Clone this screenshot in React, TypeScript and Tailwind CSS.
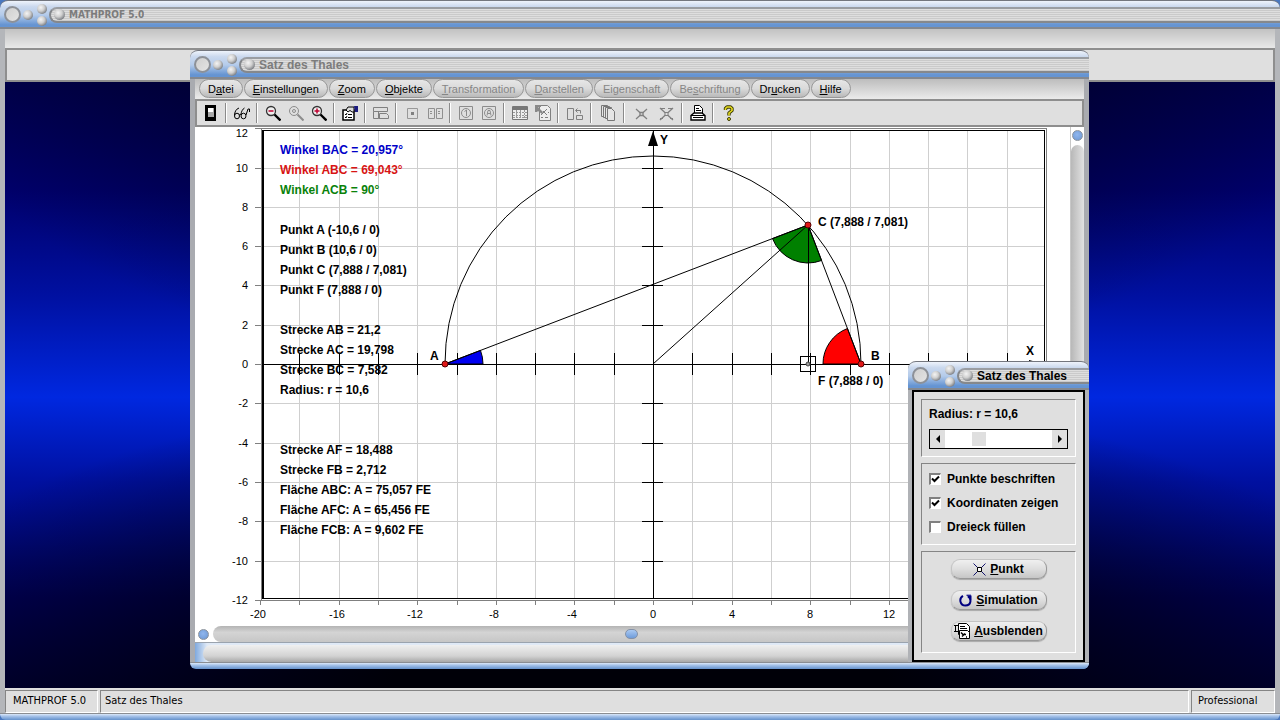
import { ReactNode, useState } from "react";
import clsx from "clsx";

const MENU = [
  { before: "D", key: "a", after: "tei" },
  { before: "", key: "E", after: "instellungen" },
  { before: "", key: "Z", after: "oom" },
  { before: "", key: "O", after: "bjekte" },
  { before: "", key: "T", after: "ransformation", disabled: true },
  { before: "", key: "D", after: "arstellen", disabled: true },
  { before: "Ei", key: "g", after: "enschaft", disabled: true },
  { before: "Be", key: "s", after: "chriftung", disabled: true },
  { before: "Dr", key: "u", after: "cken" },
  { before: "", key: "H", after: "ilfe" },
];

const RESULTS = [
  { row: 0, text: "Winkel BAC = 20,957°", color: "fill-[#0000c8]" },
  { row: 1, text: "Winkel ABC = 69,043°", color: "fill-[#d81414]" },
  { row: 2, text: "Winkel ACB = 90°", color: "fill-[#0a820a]" },
  { row: 4, text: "Punkt A (-10,6 / 0)" },
  { row: 5, text: "Punkt B (10,6 / 0)" },
  { row: 6, text: "Punkt C (7,888 / 7,081)" },
  { row: 7, text: "Punkt F (7,888 / 0)" },
  { row: 9, text: "Strecke AB = 21,2" },
  { row: 10, text: "Strecke AC = 19,798" },
  { row: 11, text: "Strecke BC = 7,582" },
  { row: 12, text: "Radius: r = 10,6" },
  { row: 15, text: "Strecke AF = 18,488" },
  { row: 16, text: "Strecke FB = 2,712" },
  { row: 17, text: "Fläche ABC: A = 75,057 FE" },
  { row: 18, text: "Fläche AFC: A = 65,456 FE" },
  { row: 19, text: "Fläche FCB: A = 9,602 FE" },
];

// plot units -> svg units
const UNIT = 19.65;
const X0 = 458;
const Y0 = 237;
const px = (x: number) => Math.round(X0 + x * UNIT);
const py = (y: number) => Math.round(Y0 - y * UNIT);

const RADIUS = 10.6;
const A = { x: px(-RADIUS), y: Y0 };
const B = { x: px(RADIUS), y: Y0 };
const C = { x: px(7.888), y: py(7.081) };
const F = { x: C.x, y: Y0 };

const range = (from: number, to: number, step: number) => {
  const out: number[] = [];
  for (let i = from; i <= to; i += step) out.push(i);
  return out;
};

function sector(p: { x: number; y: number }, r: number, from: number, to: number) {
  const rad = Math.PI / 180;
  const x1 = p.x + r * Math.cos(from * rad);
  const y1 = p.y - r * Math.sin(from * rad);
  const x2 = p.x + r * Math.cos(to * rad);
  const y2 = p.y - r * Math.sin(to * rad);
  return `M${p.x} ${p.y}L${x1} ${y1}A${r} ${r} 0 0 0 ${x2} ${y2}Z`;
}

function Orb({ label, big, className }: { label: string; big?: boolean; className: string }) {
  return (
    <button
      type="button"
      aria-label={label}
      className={clsx(
        "shrink-0 rounded-full",
        big
          ? "border-2 border-[#8d9198] bg-[linear-gradient(135deg,#cfcfcf,#e4e4e4)]"
          : "bg-[radial-gradient(circle_at_38%_35%,#f4f4f4,#cfcfcf_40%,#7c7f84_75%)]",
        className
      )}
    />
  );
}

function BlueOrb({ label }: { label: string }) {
  return (
    <button
      type="button"
      aria-label={label}
      className="size-[11px] shrink-0 rounded-full border border-[#8a929c] bg-[radial-gradient(circle_at_45%_40%,#8fb6ee,#7aa3dd_60%,#6b8fc2)]"
    />
  );
}

function TitleBar({ title, active, tahoma }: { title: string; active?: boolean; tahoma?: boolean }) {
  return (
    <header className="flex h-[29px] shrink-0 flex-col rounded-t-lg border-t border-[#73767e] bg-[linear-gradient(#eef3fb,#cbd9ee_20%,#b4cbea_50%,#6594d2_85%,#6594d2_93%,#84888f_94%)]">
      <div className="flex h-[27px] items-center pl-1">
        <Orb label="Schließen" big className="size-[17px]" />
        <Orb label="Minimieren" className="ml-[2px] size-[10px]" />
        <div className="ml-1 flex flex-col gap-[2px]">
          <Orb label="Maximieren" className="size-[10px]" />
          <Orb label="Wiederherstellen" className="size-[10px]" />
        </div>
        <div className="ml-[2px] flex h-4 min-w-0 flex-1 items-center rounded-l-full border-y-2 border-l-2 border-[#85888c] border-t-[#9a9da2] bg-[repeating-linear-gradient(#dedede_0_1px,#cacaca_1px_2px)] pl-[3px]">
          <Orb label="Systemmenü" className="size-[11px]" />
          <h1
            className={clsx(
              "truncate pl-1 font-bold leading-3",
              tahoma
                ? "font-['DejaVu_Sans_Condensed','Liberation_Sans',sans-serif] text-[10px]"
                : "text-[12px]",
              active ? "text-black" : "text-[#7c7c7c]"
            )}
          >
            {title}
          </h1>
        </div>
      </div>
    </header>
  );
}

function BottomEdge() {
  return (
    <div className="h-[7px] shrink-0 rounded-b-md border-t border-[#8a8d92] bg-[linear-gradient(#dce8f8,#a8c4ea_35%,#6d98d0_90%)]" />
  );
}

const ICONS: Record<string, ReactNode> = {
  door: (
    <>
      <path d="M2 0h11v16H2z" fill="#000" />
      <path d="M5 3h6v9H5z" fill="#a8a8a8" />
      <path d="M5 3h5v4H5z" fill="#fff" />
    </>
  ),
  glasses: (
    <g fill="none" stroke="#000">
      <path d="M5 3C2 4 .500 7 .500 10.500M10.500 3C8.500 4 7 7 7 10" />
      <ellipse cx="3" cy="11" rx="2.500" ry="2.800" />
      <ellipse cx="9.500" cy="11" rx="2.500" ry="2.800" />
      <path d="M5.500 10c.5-1 1-1 1.500 0M12 10l2-6 1.500 0v3" />
    </g>
  ),
  zoomOut: (
    <>
      <circle cx="6" cy="6" r="4.500" fill="#eee" stroke="#333" strokeWidth="1.300" />
      <path d="M9.500 9.500l6 6" stroke="#000" strokeWidth="2.400" />
      <path d="M3.500 6h5" stroke="#c00030" strokeWidth="1.500" />
    </>
  ),
  zoomReset: (
    <g fill="none" stroke="#8c8c8c">
      <circle cx="6" cy="6" r="4.500" />
      <circle cx="6" cy="6" r="1.500" />
      <path d="M9.500 9.500l6 6" strokeWidth="2" />
    </g>
  ),
  zoomIn: (
    <>
      <circle cx="6" cy="6" r="4.500" fill="#eee" stroke="#333" strokeWidth="1.300" />
      <path d="M9.500 9.500l6 6" stroke="#000" strokeWidth="2.400" />
      <path d="M3.500 6h5M6 3.500v5" stroke="#c00030" strokeWidth="1.500" />
    </>
  ),
  properties: (
    <>
      <path d="M1 5h11v10H1z" fill="#fff" stroke="#000" strokeWidth="1.500" />
      <path d="M3 9l1 1 1-2M6 9.500h4M3 12l1 1 1-2M6 12.500h4" fill="none" stroke="#000" />
      <path d="M4 5l2-3h6v5h-2L8 5.500 6 7z" fill="#ddd" stroke="#000" />
      <path d="M12 1h4v6h-3z" fill="#1c1c80" />
    </>
  ),
  panels: (
    <g fill="none" stroke="#808080">
      <path d="M.500 2.500h14v4H.500zM.500 6.500v7h5v-7M8.500 13.500H5.500M6.500 8.500h7l2 2v3h-9z" />
    </g>
  ),
  square: (
    <>
      <path d="M3.500 3.500h10v10h-10z" fill="none" stroke="#989898" />
      <path d="M7 7h3v3H7z" fill="#808080" />
    </>
  ),
  squares: (
    <g fill="none" stroke="#909090">
      <path d="M1.500 3.500h6v10h-6zM9.500 3.500h6v10h-6z" />
      <path d="M4 6v4M12 6v4" strokeWidth="2" strokeDasharray="1 1" />
    </g>
  ),
  circleOne: (
    <g fill="none" stroke="#8c8c8c">
      <path d="M1.500 1.500h13v13h-13z" />
      <circle cx="8" cy="8" r="4.500" />
      <path d="M6.500 6.500L8.500 5v6" />
    </g>
  ),
  circleA: (
    <g fill="none" stroke="#8c8c8c">
      <path d="M1.500 1.500h13v13h-13z" />
      <circle cx="8" cy="8" r="4.500" />
      <path d="M6 10.500l1-5h2l1 5M7 8.500h2" />
    </g>
  ),
  table: (
    <>
      <path d="M.500 1.500h15v13H.500z" fill="#eee" stroke="#777" />
      <path d="M1 2h14v3H1z" fill="#777" />
      <path d="M1 7.500h14M1 10.500h14M1 12.500h14M4.500 5v9M8.500 5v9M12.500 5v9" stroke="#999" strokeDasharray="2 1" />
    </>
  ),
  report: (
    <>
      <path d="M4.500 .500h8l3 3v12h-11z" fill="#eee" stroke="#808080" />
      <path d="M0 0h6v2H3l5 5-1 2-4-3-1 1H0z" fill="#888" />
      <path d="M12 4L6 10M8 6l4 4M6 12.500h2M10 12.500h3M13 7.500h1" stroke="#808080" />
    </>
  ),
  transfer: (
    <g fill="none" stroke="#808080">
      <path d="M.500 3.500h6v11h-6zM9.500 10.500h6v4h-6zM9 5.500h4.500v3M10.500 3.500l-2 2 2 2" />
    </g>
  ),
  layers: (
    <g fill="#e5e5e5" stroke="#777">
      <path d="M1.500 .500h6v11h-6z" />
      <path d="M3.500 1.500h6v11h-6z" />
      <path d="M5.500 2.500h6v11h-6z" />
      <path d="M7.500 3.500h4l3 3v9h-7z" />
    </g>
  ),
  cross: (
    <g fill="none" stroke="#808080" strokeWidth="1.300">
      <path d="M3 4l11 10M14 4L3 14" />
      <path d="M7 7.500h3v3H7z" fill="#ddd" />
    </g>
  ),
  crossWide: (
    <g fill="none" stroke="#808080">
      <path d="M2 3l13 12M15 3L2 15" strokeWidth="1.300" />
      <path d="M3 3.500h4M10 3.500h4M2 13.500h3M12 13.500h3" />
      <path d="M7 7.500h3v3H7z" fill="#ddd" />
    </g>
  ),
  printer: (
    <g fill="#fff" stroke="#000">
      <path d="M4.500 8.500v-8h5l3 3v5" />
      <path d="M6 3.500h3M6 5.500h5" />
      <path d="M1 10.500l3-2.500h8l3 2.500v4.500H1z" strokeWidth="1.400" />
      <path d="M1 10.500h14M3 12.500h10" />
    </g>
  ),
  help: (
    <g fill="none" strokeLinejoin="round">
      <path d="M4.500 5V3.500L6 2h3.500L11 3.500v2L8 8v2.500" stroke="#3a3a00" strokeWidth="3.400" />
      <path d="M4.500 5V3.500L6 2h3.500L11 3.500v2L8 8v2.500" stroke="#e8dc20" strokeWidth="1.600" />
      <circle cx="8" cy="14" r="1.500" fill="#e8dc20" stroke="#3a3a00" />
    </g>
  ),
};

const TOOLS: { wide?: boolean; items: { icon: string; label: string }[] }[] = [
  { items: [{ icon: "door", label: "Beenden" }] },
  { items: [{ icon: "glasses", label: "Ansicht" }] },
  {
    items: [
      { icon: "zoomOut", label: "Verkleinern" },
      { icon: "zoomReset", label: "Originalgröße" },
      { icon: "zoomIn", label: "Vergrößern" },
    ],
  },
  { items: [{ icon: "properties", label: "Eigenschaften" }] },
  { items: [{ icon: "panels", label: "Fenster" }] },
  { items: [{ icon: "square", label: "Punkt" }, { icon: "squares", label: "Punkte" }] },
  { items: [{ icon: "circleOne", label: "Objekt 1" }, { icon: "circleA", label: "Objekt A" }] },
  { items: [{ icon: "table", label: "Tabelle" }, { icon: "report", label: "Bericht" }] },
  { wide: true, items: [{ icon: "transfer", label: "Übertragen" }] },
  { wide: true, items: [{ icon: "layers", label: "Ebenen" }] },
  { wide: true, items: [{ icon: "cross", label: "Schnittpunkt" }, { icon: "crossWide", label: "Schnittpunkte" }] },
  { items: [{ icon: "printer", label: "Drucken" }] },
  { items: [{ icon: "help", label: "Hilfe" }] },
];

function Toolbar() {
  return (
    <div className="flex h-[26px] shrink-0 items-center border-x-2 border-b-2 border-[#8e8e8e] bg-[#dfdfdf] pl-[2px]">
      {TOOLS.map((group, i) => (
        <div key={i} className="flex items-center">
          {i > 0 && <div className="mx-[3px] h-5 w-[2px] border-l border-[#8a8a8a] bg-white" />}
          {group.items.map((t) => (
            <button
              key={t.icon}
              type="button"
              aria-label={t.label}
              className={clsx("flex h-[22px] items-center justify-center", group.wide ? "w-[25px]" : "w-[23px]")}
            >
              <svg viewBox="0 0 16 16" className="size-4">
                {ICONS[t.icon]}
              </svg>
            </button>
          ))}
        </div>
      ))}
    </div>
  );
}

function Plot({ labels, coords, filled }: { labels: boolean; coords: boolean; filled: boolean }) {
  const evenX = range(-18, 18, 2);
  const evenY = range(-10, 10, 2);
  return (
    <svg
      viewBox="0 0 875 499"
      preserveAspectRatio="xMinYMin slice"
      className="min-h-0 min-w-0 flex-1 bg-white"
      role="img"
      aria-label="Satz des Thales"
    >
      <g shapeRendering="crispEdges" fill="none">
        <g stroke="#cfcfcf">
          {evenX.map((x) => (
            <path key={x} d={`M${px(x)} 3V472`} />
          ))}
          {evenY.map((y) => (
            <path key={y} d={`M68 ${py(y)}H849`} />
          ))}
        </g>
        <rect x="66.500" y="1.500" width="785" height="472" stroke="#808080" />
        <rect x="67.500" y="3.500" width="782" height="468" stroke="#000" />
        <path d="M68.500 3.500V471.500" stroke="#000" />
        <g stroke="#808080">
          {range(-12, 12, 2).map((y) => (
            <path key={y} d={`M60 ${py(y)}h6`} />
          ))}
          {range(-20, 18, 2).map((x) => (
            <path key={x} d={`M${px(x)} 473v5`} />
          ))}
        </g>
        <g stroke="#000">
          <path d={`M68 ${Y0}H850M${X0} 3V472`} />
          {evenX.map((x) => (
            <path key={x} d={`M${px(x)} ${Y0 - 11}v22`} />
          ))}
          {evenY.map((y) => (
            <path key={y} d={`M${X0 - 11} ${py(y)}h21`} />
          ))}
        </g>
      </g>
      <path d={`M${X0} 4l5 15h-10z`} />
      <path d={`M849 ${Y0}l-15 -4v8z`} />

      <g className="font-['Liberation_Sans',sans-serif] text-[11px]">
        {range(-12, 12, 2).map((y) => (
          <text key={y} x="53" y={y === 12 ? 10 : py(y) + 4} textAnchor="end">
            {y}
          </text>
        ))}
        {range(-20, 16, 4).map((x) => (
          <text key={x} x={px(x) - (x < 0 ? 2 : 0)} y="491" textAnchor="middle">
            {x}
          </text>
        ))}
      </g>

      {filled && <path d={`M${A.x} ${A.y}L${B.x} ${B.y}L${C.x} ${C.y}Z`} fill="#ffff80" />}
      <path d={sector(A, 38, 0, 20.957)} fill="#0000f0" stroke="#000" />
      <path d={sector(B, 38, 110.957, 180)} fill="#ff0000" stroke="#000" />
      <path d={sector(C, 38, 200.957, 290.957)} fill="#008000" stroke="#000" />
      <g fill="none" stroke="#000">
        <path d={`M${A.x} ${A.y}A208 208 0 0 1 ${B.x} ${B.y}`} />
        <path d={`M${A.x} ${A.y}L${C.x} ${C.y}L${B.x} ${B.y}M${X0} ${Y0}L${C.x} ${C.y}`} />
        <path d={`M${C.x} ${C.y}V${F.y}M${F.x - 8} ${F.y - 8}h15v15h-15z`} shapeRendering="crispEdges" />
      </g>
      <circle cx={F.x} cy={F.y} r="2" fill="#999" stroke="#444" />
      {[A, B, C].map((p, i) => (
        <circle key={i} cx={p.x} cy={p.y} r="3" fill="#e01818" stroke="#500" />
      ))}

      <g className="font-['Liberation_Sans',sans-serif] text-[12px] font-bold">
        {RESULTS.map((r) => (
          <text key={r.row} x="85" y={27 + r.row * 20} className={r.color}>
            {r.text}
          </text>
        ))}
        {labels && (
          <>
            <text x={A.x - 15} y="233">A</text>
            <text x={B.x + 10} y="233">B</text>
            <text x="623" y="99">{coords ? "C (7,888 / 7,081)" : "C"}</text>
            <text x="623" y="258">{coords ? "F (7,888 / 0)" : "F"}</text>
          </>
        )}
        <text x="465" y="17">Y</text>
        <text x="831" y="228">X</text>
      </g>
    </svg>
  );
}

function Check({
  label,
  checked,
  onChange,
}: {
  label: string;
  checked: boolean;
  onChange: (v: boolean) => void;
}) {
  return (
    <label className="flex h-4 items-center gap-[6px]">
      <span className="grid size-3">
        <input
          type="checkbox"
          checked={checked}
          onChange={(e) => onChange(e.target.checked)}
          className="peer col-start-1 row-start-1 size-3 appearance-none border-2 border-b border-r border-[#808080] border-b-white border-r-white bg-white"
        />
        <svg viewBox="0 0 12 12" className="pointer-events-none invisible col-start-1 row-start-1 size-3 peer-checked:visible">
          <path d="M3 5.500l2.500 2.500L10 3.500" fill="none" stroke="#000" strokeWidth="2" />
        </svg>
      </span>
      {label}
    </label>
  );
}

function PanelButton({ icon, children }: { icon: ReactNode; children: ReactNode }) {
  return (
    <button
      type="button"
      className="flex h-5 w-24 items-center justify-center gap-1 rounded-[9px] border border-[#c4c4c4] border-b-[#989898] border-r-[#989898] bg-[linear-gradient(#f0f0f0,#dedede_50%,#c6c6c6)] shadow-[0_1px_1px_#a8a8a8]"
    >
      {icon}
      <span>{children}</span>
    </button>
  );
}

const FIELDSET = "border border-[#858585] border-b-white border-r-white";

export default function App() {
  const [labels, setLabels] = useState(true);
  const [coords, setCoords] = useState(true);
  const [filled, setFilled] = useState(false);
  const [radius, setRadius] = useState(10.6);

  const step = (d: number) => setRadius((r) => Math.round((r + d) * 10) / 10);

  return (
    <div className="relative flex h-screen flex-col overflow-hidden bg-[#4a78c0] font-['Liberation_Sans',Arial,sans-serif] text-black">
      <TitleBar title="MATHPROF 5.0" tahoma />
      <div className="flex min-h-0 flex-1 flex-col border-x-[5px] border-[#b4b6ba]">
        <div className="h-[21px] shrink-0 border-b-2 border-[#8e8e8e] bg-[linear-gradient(#c2c2c2,#e8e8e8)]" />
        <div className="h-8 shrink-0 border-x-2 border-b-2 border-[#8e8e8e] bg-[#dfdfdf]" />
        <main className="min-h-0 flex-1 bg-[radial-gradient(ellipse_55%_50%_at_50%_0%,rgba(0,0,10,0.9),transparent),radial-gradient(ellipse_65%_50%_at_50%_100%,#000008_30%,transparent),linear-gradient(#00004c,#00006c_18%,#0010a0_35%,#0028e0_52%,#0010a0_66%,#00005c_85%,#000038)]" />
        <footer className="flex h-[25px] shrink-0 gap-[2px] bg-[#dfdfdf] pt-[2px] font-['DejaVu_Sans_Condensed','Liberation_Sans',sans-serif] text-[11px] leading-5">
          <div className={clsx(FIELDSET, "w-[93px] truncate pl-[7px]")}>MATHPROF 5.0</div>
          <div className={clsx(FIELDSET, "flex-1 pl-1")}>Satz des Thales</div>
          <div className={clsx(FIELDSET, "w-[84px] pl-[6px]")}>Professional</div>
        </footer>
      </div>
      <BottomEdge />

      <section className="absolute left-[190px] top-[50px] flex h-[619px] w-[899px] flex-col">
        <TitleBar title="Satz des Thales" />
        <div className="flex min-h-0 flex-1 flex-col border-x-[5px] border-[#a9abb0]">
          <nav className="flex h-[22px] shrink-0 items-start gap-px border-b-2 border-[#8e8e8e] bg-[linear-gradient(#bdbdbd,#ebebeb)] pl-1 text-[11px] leading-4">
            {MENU.map((m) => (
              <button
                key={m.before + m.key + m.after}
                type="button"
                disabled={m.disabled}
                className="h-[19px] rounded-full border border-[#979797] bg-[linear-gradient(#e6e6e6,#dadada_50%,#b9b9b9)] px-2 text-black disabled:text-[#868686]"
              >
                {m.before}
                <u>{m.key}</u>
                {m.after}
              </button>
            ))}
          </nav>
          <Toolbar />
          <div className="flex min-h-0 flex-1 bg-white">
            <Plot labels={labels} coords={coords} filled={filled} />
            <div className="flex w-[14px] shrink-0 flex-col items-center border-l border-[#c8c8c8] pt-[3px]">
              <BlueOrb label="Nach oben" />
              <div className="mt-1 w-full flex-1 rounded-t-full bg-[linear-gradient(to_right,#b8b8b8,#e2e2e2)]" />
            </div>
          </div>
          <div className="flex h-4 shrink-0 items-center bg-white pl-[3px]">
            <BlueOrb label="Nach links" />
            <div className="ml-1 flex h-4 flex-1 items-center rounded-l-full bg-[linear-gradient(#b4b4b4,#d4d4d4_40%,#c6c6c6)] pl-[412px]">
              <div className="h-[10px] w-[13px] rounded-[5px] border border-[#8391a8] bg-[linear-gradient(#a9c9f3,#6f9cda)]" />
            </div>
          </div>
          <div className="h-5 shrink-0 border-t border-[#9aa3ae] bg-[linear-gradient(to_right,#7fa9de,#dfe9f6_12px)] pl-2 pt-[2px]">
            <div className="h-full rounded-l-full bg-[linear-gradient(#f0f0f0,#d2d2d2_65%,#a8a8a8)]" />
          </div>
        </div>
        <BottomEdge />
      </section>

      <section className="absolute left-[908px] top-[361px] flex w-[181px] flex-col text-[12px] font-bold">
        <TitleBar title="Satz des Thales" active />
        <div className="border-x-4 border-[#b0b2b6]">
          <div className="flex flex-col gap-[6px] border-2 border-black bg-[#dfdfdf] p-[7px]">
            <div className={clsx(FIELDSET, "flex h-[58px] flex-col gap-[7px] px-[7px] pt-[6px] leading-4")}>
              <label htmlFor="radius">
                Radius: r = {radius.toLocaleString("de-DE")}
              </label>
              <div className="flex h-5 items-stretch border border-black bg-white">
                <button type="button" aria-label="Kleiner" onClick={() => step(-0.1)} className="flex w-[15px] shrink-0 items-center justify-center bg-[#dfdfdf]">
                  <svg viewBox="0 0 8 8" className="size-2">
                    <path d="M6 0v8L2 4z" />
                  </svg>
                </button>
                <input
                  id="radius"
                  type="range"
                  min={0}
                  max={36}
                  step={0.1}
                  value={radius}
                  onChange={(e) => setRadius(Number(e.target.value))}
                  className="h-full min-w-0 flex-1 appearance-none bg-white [&::-webkit-slider-thumb]:h-[14px] [&::-webkit-slider-thumb]:w-[14px] [&::-webkit-slider-thumb]:appearance-none [&::-webkit-slider-thumb]:bg-[#dfdfdf]"
                />
                <button type="button" aria-label="Größer" onClick={() => step(0.1)} className="flex w-[15px] shrink-0 items-center justify-center bg-[#dfdfdf]">
                  <svg viewBox="0 0 8 8" className="size-2">
                    <path d="M2 0v8l4-4z" />
                  </svg>
                </button>
              </div>
            </div>
            <div className={clsx(FIELDSET, "flex h-[82px] flex-col gap-2 px-[7px] pt-[7px]")}>
              <Check label="Punkte beschriften" checked={labels} onChange={setLabels} />
              <Check label="Koordinaten zeigen" checked={coords} onChange={setCoords} />
              <Check label="Dreieck füllen" checked={filled} onChange={setFilled} />
            </div>
            <div className={clsx(FIELDSET, "flex h-[102px] flex-col items-center gap-[11px] pt-[7px]")}>
              <PanelButton
                icon={
                  <svg viewBox="0 0 13 13" className="size-[13px]" fill="none">
                    <path d="M.500 .500l12 12M12.500 .500l-12 12" stroke="#14146e" />
                    <path d="M4.500 4.500h4v4h-4z" fill="#fff" stroke="#000" />
                  </svg>
                }
              >
                <u>P</u>unkt
              </PanelButton>
              <PanelButton
                icon={
                  <svg viewBox="0 0 13 13" className="size-[13px]" fill="none" stroke="#000080" strokeWidth="2">
                    <path d="M4 1.800C-.5 4.500 1 11.500 6.500 11.500S13 5 9 2.500" />
                    <path d="M7.500 1.500h5v4.500z" fill="#000080" stroke="none" />
                    <path d="M7.500 1.200h4.500" strokeWidth="1" />
                  </svg>
                }
              >
                <u>S</u>imulation
              </PanelButton>
              <PanelButton
                icon={
                  <svg viewBox="0 0 16 16" className="size-4 shrink-0" fill="none" stroke="#000">
                    <path d="M4.500 .500h8l3 3v8h-11z" fill="#fff" />
                    <path d="M0 2.500h4M1.500 2.500v6h3M0 8.500h2M6 3.500h5M6 5.500h7" />
                    <path d="M5.500 7.500h8l2 2v6h-10z" fill="#fff" />
                    <path d="M7 9.500l2 2h3M8 13.500l3-3M12 14h1" strokeWidth="1.400" />
                  </svg>
                }
              >
                <u>A</u>usblenden
              </PanelButton>
            </div>
          </div>
        </div>
        <BottomEdge />
      </section>
    </div>
  );
}
